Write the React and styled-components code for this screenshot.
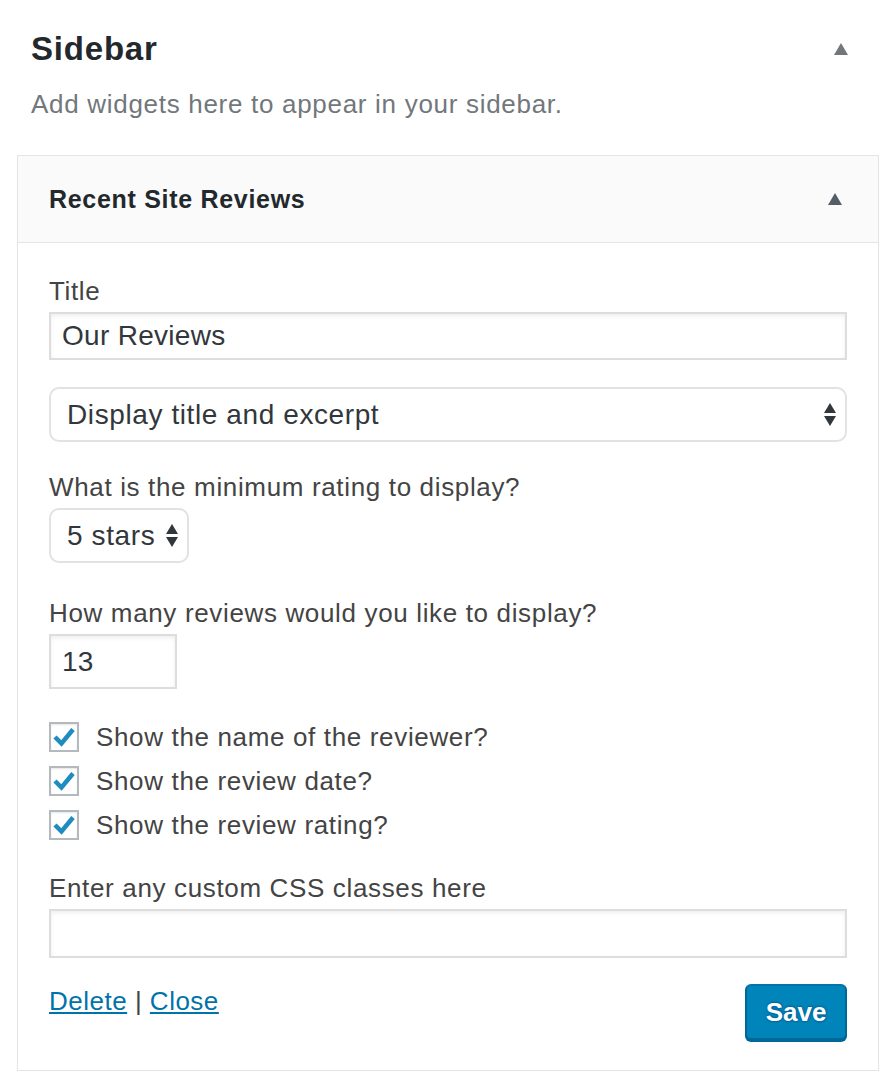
import React from 'react'
import styled, { createGlobalStyle } from 'styled-components'

const GlobalStyle = createGlobalStyle`
  body {
    margin: 0;
    background: #fff;
    font-family: "Liberation Sans", Arial, sans-serif;
    color: #444;
  }
`

const Page = styled.div`
  width: 896px;
  padding: 0 17px;
  box-sizing: border-box;
`

const SidebarHead = styled.div`
  display: flex;
  align-items: center;
  justify-content: space-between;
  padding: 24px 31px 0 14px;
  height: 50px;
`

const SidebarTitle = styled.h2`
  margin: 0;
  font-size: 33px;
  font-weight: 700;
  letter-spacing: 0.8px;
  color: #23282d;
`

const Arrow = styled.span`
  width: 0;
  height: 0;
  border-left: 7px solid transparent;
  border-right: 7px solid transparent;
  border-bottom: 12px solid ${(p) => p.color || '#72777c'};
`

const Description = styled.p`
  margin: 14px 0 0 14px;
  font-size: 26px;
  line-height: 32px;
  letter-spacing: 0.7px;
  color: #72777c;
`

const Widget = styled.div`
  margin-top: 35px;
  border: 1px solid #e5e5e5;
  box-shadow: 0 1px 1px rgba(0, 0, 0, 0.04);
`

const WidgetTop = styled.div`
  display: flex;
  align-items: center;
  justify-content: space-between;
  height: 86px;
  padding: 0 36px 0 31px;
  background: #fafafa;
  border-bottom: 1px solid #e5e5e5;
`

const WidgetTitle = styled.h3`
  margin: 0;
  font-size: 25px;
  font-weight: 700;
  letter-spacing: 0.7px;
  color: #23282d;
`

const WidgetBody = styled.div`
  padding: 30px 31px 30px;
`

const Field = styled.div`
  display: flex;
  flex-direction: column;
  align-items: flex-start;
  margin-top: ${(p) => p.gap || 0}px;
`

const Label = styled.label`
  font-size: 26px;
  line-height: 36px;
  letter-spacing: 0.65px;
  color: #444;
  margin-bottom: 3px;
`

const TextInput = styled.div`
  box-sizing: border-box;
  width: ${(p) => p.width || '100%'};
  height: ${(p) => p.height || 48}px;
  display: flex;
  align-items: center;
  padding: 0 11px;
  border: 2px solid #ddd;
  box-shadow: inset 0 2px 4px rgba(0, 0, 0, 0.07);
  background: #fff;
  font-size: 28px;
  letter-spacing: 0.3px;
  color: #32373c;
`

const Select = styled.div`
  box-sizing: border-box;
  width: ${(p) => p.width || '100%'};
  height: 55px;
  display: flex;
  align-items: center;
  justify-content: space-between;
  padding: 0 9px 0 16px;
  border: 2px solid #e2e2e2;
  border-radius: 10px;
  background: #fff;
  font-size: 28px;
  letter-spacing: 0.6px;
  color: #32373c;
`

const Spinner = styled.span`
  display: flex;
  flex-direction: column;
  gap: 3px;
  margin-left: 8px;

  &::before,
  &::after {
    content: '';
    width: 0;
    height: 0;
    border-left: 6px solid transparent;
    border-right: 6px solid transparent;
  }
  &::before {
    border-bottom: 10px solid #32373c;
  }
  &::after {
    border-top: 10px solid #32373c;
  }
`

const Checks = styled.div`
  display: flex;
  flex-direction: column;
  gap: 14px;
  margin-top: 33px;
`

const CheckRow = styled.label`
  display: flex;
  align-items: center;
  gap: 17px;
  font-size: 26px;
  line-height: 30px;
  letter-spacing: 0.65px;
  color: #444;
`

const Box = styled.span`
  box-sizing: border-box;
  width: 30px;
  height: 30px;
  border: 2px solid #b4b9be;
  box-shadow: inset 0 1px 2px rgba(0, 0, 0, 0.1);
  background: #fff;
  display: flex;
  align-items: center;
  justify-content: center;
`

const Actions = styled.div`
  display: flex;
  justify-content: space-between;
  align-items: flex-start;
  margin-top: 26px;
`

const Links = styled.div`
  font-size: 26px;
  line-height: 32px;
  letter-spacing: 0.5px;
  color: #444;
  padding-top: 1px;
`

const Link = styled.a`
  color: #0073aa;
  text-decoration: underline;
  cursor: pointer;
`

const SaveButton = styled.button`
  box-sizing: border-box;
  width: 102px;
  height: 56px;
  background: #0085ba;
  border: 2px solid #0073aa;
  border-color: #0073aa #006799 #006799;
  border-radius: 6px;
  box-shadow: 0 2px 0 #006799;
  color: #fff;
  font-family: "Liberation Sans", Arial, sans-serif;
  font-size: 26px;
  font-weight: 700;
  text-shadow: 0 -1px 2px #006799, 1px 0 2px #006799, 0 1px 2px #006799;
  cursor: pointer;
`

const Check = () => (
  <svg width="22" height="20" viewBox="0 0 22 20">
    <path d="M2 10 L8.5 16.5 L20 2.5" fill="none" stroke="#1e8cbe" strokeWidth="4.5" />
  </svg>
)

const options = [
  'Show the name of the reviewer?',
  'Show the review date?',
  'Show the review rating?',
]

export default function App() {
  return (
    <Page>
      <GlobalStyle />
      <SidebarHead>
        <SidebarTitle>Sidebar</SidebarTitle>
        <Arrow />
      </SidebarHead>
      <Description>Add widgets here to appear in your sidebar.</Description>
      <Widget>
        <WidgetTop>
          <WidgetTitle>Recent Site Reviews</WidgetTitle>
          <Arrow color="#555d66" />
        </WidgetTop>
        <WidgetBody>
          <Field>
            <Label>Title</Label>
            <TextInput>Our Reviews</TextInput>
          </Field>
          <Field gap={27}>
            <Select>
              Display title and excerpt
              <Spinner />
            </Select>
          </Field>
          <Field gap={27}>
            <Label>What is the minimum rating to display?</Label>
            <Select width="140px">
              5 stars
              <Spinner />
            </Select>
          </Field>
          <Field gap={32}>
            <Label>How many reviews would you like to display?</Label>
            <TextInput width="128px" height={55}>13</TextInput>
          </Field>
          <Checks>
            {options.map((o) => (
              <CheckRow key={o}>
                <Box>
                  <Check />
                </Box>
                {o}
              </CheckRow>
            ))}
          </Checks>
          <Field gap={30}>
            <Label>Enter any custom CSS classes here</Label>
            <TextInput height={49} />
          </Field>
          <Actions>
            <Links>
              <Link>Delete</Link> | <Link>Close</Link>
            </Links>
            <SaveButton>Save</SaveButton>
          </Actions>
        </WidgetBody>
      </Widget>
    </Page>
  )
}
